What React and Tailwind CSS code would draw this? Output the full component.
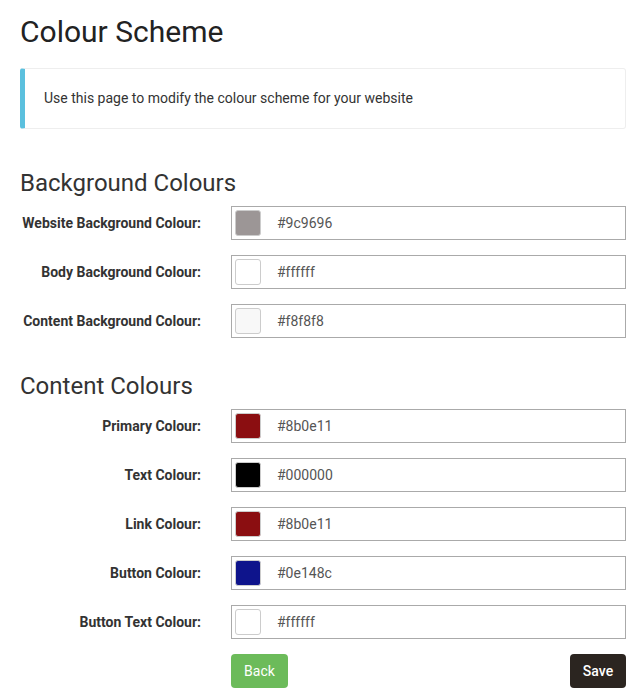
const backgroundRows = [
  { label: 'Website Background Colour:', value: '#9c9696' },
  { label: 'Body Background Colour:', value: '#ffffff' },
  { label: 'Content Background Colour:', value: '#f8f8f8' },
]

const contentRows = [
  { label: 'Primary Colour:', value: '#8b0e11' },
  { label: 'Text Colour:', value: '#000000' },
  { label: 'Link Colour:', value: '#8b0e11' },
  { label: 'Button Colour:', value: '#0e148c' },
  { label: 'Button Text Colour:', value: '#ffffff' },
]

function ColourRow({ label, value }) {
  return (
    <div className="flex items-center">
      <label className="w-[181px] text-right text-[14px] font-bold text-[#333]">{label}</label>
      <div className="ml-[30px] flex h-[34px] flex-1 items-center border border-[#aaa] bg-white px-[3px]">
        <span
          className="h-[26px] w-[26px] rounded-[3px] border border-[#ccc]"
          style={{ backgroundColor: value }}
        />
        <span className="ml-[16px] text-[14px] text-[#555]">{value}</span>
      </div>
    </div>
  )
}

export default function App() {
  return (
    <div className="min-h-screen bg-white pl-[20px] pr-[18px] font-['Roboto',sans-serif] text-[#333]">
      <h1 className="pt-[14px] text-[30px] leading-[36px] text-[#222]">Colour Scheme</h1>

      <div className="mt-[18px] rounded-[3px] border border-l-[5px] border-[#eee] border-l-[#5bc0de] pb-[20px] pl-[19px] pt-[19px] text-[14px] leading-[20px]">
        Use this page to modify the colour scheme for your website
      </div>

      <h2 className="mt-[40px] text-[24px] leading-[28px]">Background Colours</h2>
      <div className="mt-[9px] flex flex-col gap-[15px]">
        {backgroundRows.map((row) => (
          <ColourRow key={row.label} {...row} />
        ))}
      </div>

      <h2 className="mt-[34px] text-[24px] leading-[28px]">Content Colours</h2>
      <div className="mt-[9px] flex flex-col gap-[15px]">
        {contentRows.map((row) => (
          <ColourRow key={row.label} {...row} />
        ))}
      </div>

      <div className="ml-[211px] mt-[15px] flex justify-between">
        <button className="h-[34px] w-[57px] rounded-[4px] bg-[#6cbb5a] text-[14px] text-white">Back</button>
        <button className="h-[34px] w-[56px] rounded-[4px] bg-[#2b2520] text-[14px] font-medium text-white">Save</button>
      </div>
    </div>
  )
}
